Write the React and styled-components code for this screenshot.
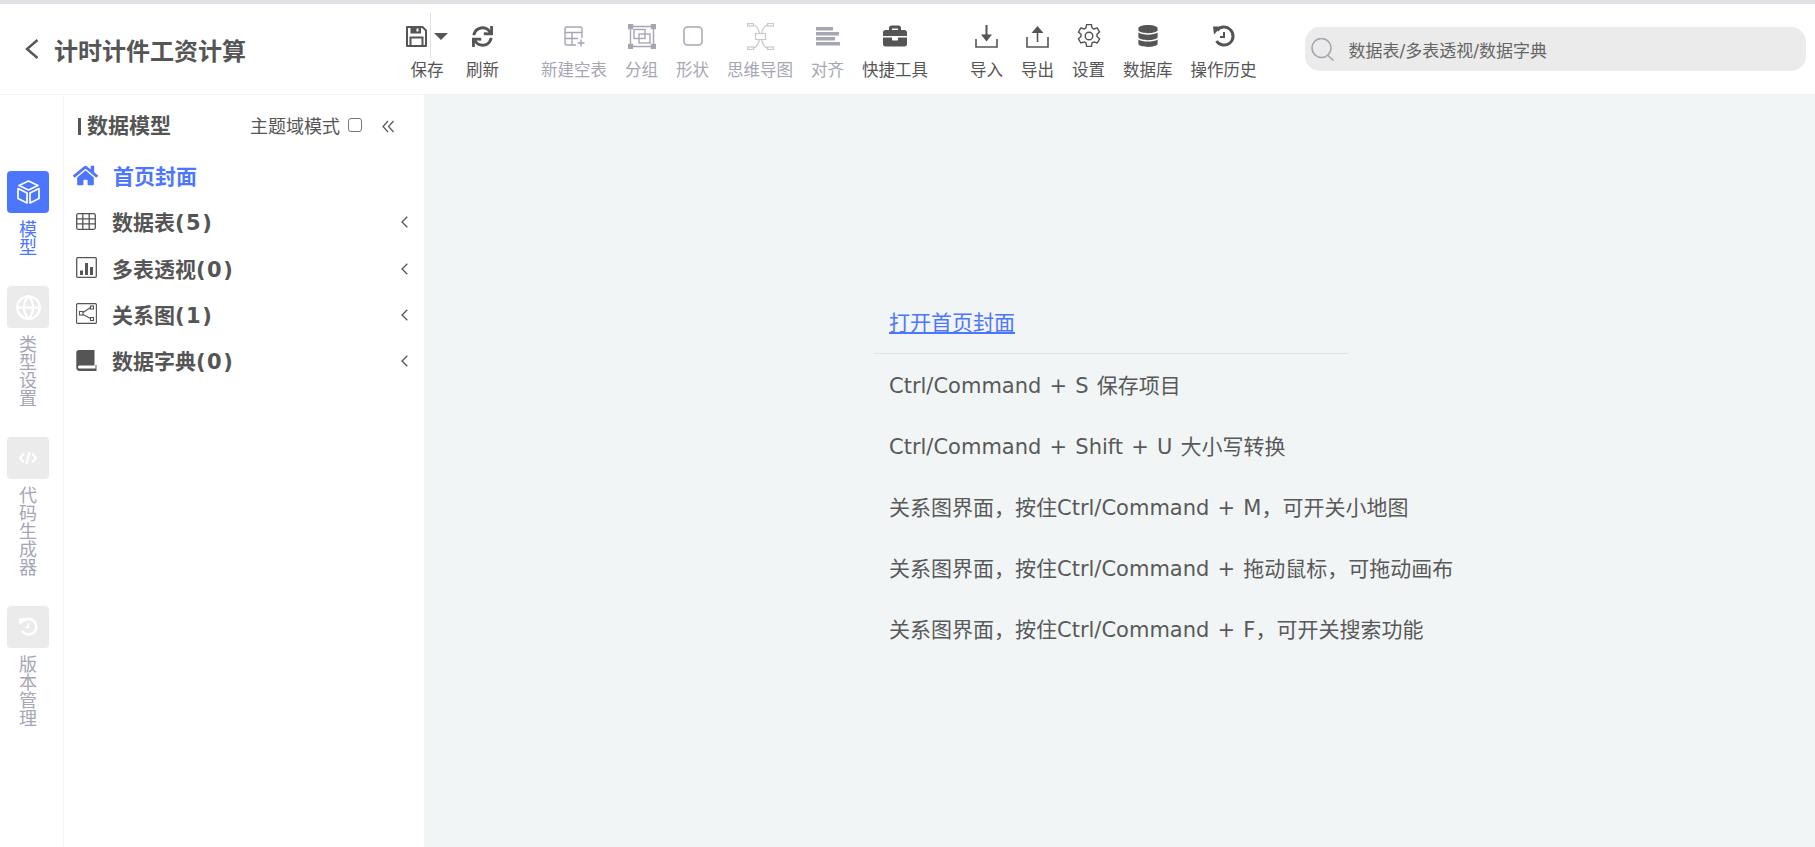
import styled, { createGlobalStyle } from "styled-components";
import { FaHome, FaSync, FaBriefcase, FaDatabase } from "react-icons/fa";
import { Globe } from "lucide-react";

const GlobalStyle = createGlobalStyle`
  html, body {
    margin: 0;
    padding: 0;
    height: 100%;
    overflow: hidden;
    background: #f1f5f6;
    font-family: "DejaVu Sans", "Noto Sans CJK SC", sans-serif;
    color: #555;
  }
`;

const SaveIcon = () => (
  <svg width="21" height="21" viewBox="0 0 21 21" fill="none" stroke="currentColor" strokeWidth="2">
    <path d="M1 1h15.500L20 4.500V20H1z" strokeLinejoin="round" />
    <path d="M4.500 1h10.500v6.500H4.500z" fill="currentColor" stroke="none" />
    <path d="M11.500 2.500v3" stroke="#fff" />
    <path d="M4.500 20v-8.500h12V20" />
  </svg>
);

const NewTableIcon = () => (
  <svg width="21" height="21" viewBox="0 0 21 21" fill="none" stroke="currentColor" strokeWidth="1.400">
    <path d="M12 19H2.500A1.500 1.500 0 0 1 1 17.500v-15A1.500 1.500 0 0 1 2.500 1h14A1.500 1.500 0 0 1 18 2.500V12" />
    <path d="M1 6.500h17M1 12.500h13M8 6.500V19" />
    <path d="M17 13.500v7M13.500 17h7" />
  </svg>
);

const GroupIcon = () => (
  <svg width="28" height="25" viewBox="0 0 28 25" fill="none" stroke="currentColor" strokeWidth="1.400">
    <path d="M3 2.500h22M3 22.500h22M2.500 3v19M25.500 3v19" />
    <rect x="0.500" y="0.500" width="4" height="4" fill="currentColor" />
    <rect x="23.500" y="0.500" width="4" height="4" fill="currentColor" />
    <rect x="0.500" y="20.500" width="4" height="4" fill="currentColor" />
    <rect x="23.500" y="20.500" width="4" height="4" fill="currentColor" />
    <rect x="6" y="5.500" width="11" height="9" />
    <rect x="11" y="10" width="11" height="9" />
  </svg>
);

const ShapeIcon = () => (
  <svg width="20" height="20" viewBox="0 0 20 20" fill="none" stroke="currentColor" strokeWidth="1.500">
    <rect x="1" y="1" width="18" height="18" rx="3.500" />
  </svg>
);

const MindMapIcon = () => (
  <svg width="27" height="27" viewBox="0 0 27 27" fill="none" stroke="#c9c9c9" strokeWidth="1.200">
    <rect x="0.500" y="0.500" width="6" height="2.500" />
    <rect x="20.500" y="0.500" width="6" height="2.500" />
    <rect x="0.500" y="24" width="6" height="2.500" />
    <rect x="20.500" y="24" width="6" height="2.500" />
    <rect x="8.500" y="10.500" width="10" height="6" />
    <path d="M6.500 2c4 1 5 4 6 8.500M20.500 2c-4 1-5 4-6 8.500M6.500 25c4-1 5-4 6-8.500M20.500 25c-4-1-5-4-6-8.500" />
  </svg>
);

const AlignIcon = () => (
  <svg width="24" height="19" viewBox="0 0 24 19" fill="currentColor">
    <rect x="0" y="0" width="17" height="3.500" />
    <rect x="0" y="5" width="23" height="3.500" />
    <rect x="0" y="10" width="19" height="3.500" />
    <rect x="0" y="15" width="24" height="3.500" />
  </svg>
);

const ImportIcon = () => (
  <svg width="23" height="23" viewBox="0 0 23 23" fill="none" stroke="currentColor">
    <path d="M1 14v8h21v-8" strokeWidth="1.600" />
    <path d="M11.500 0v10" strokeWidth="2" />
    <path d="M6 9.500h11l-5.500 7z" fill="currentColor" stroke="none" />
  </svg>
);

const ExportIcon = () => (
  <svg width="23" height="23" viewBox="0 0 23 23" fill="none" stroke="currentColor">
    <path d="M1 12v10h21V12" strokeWidth="1.600" />
    <path d="M11.500 6v11" strokeWidth="1.600" />
    <path d="M5.500 8h12l-6-7z" fill="currentColor" stroke="none" />
  </svg>
);

const GearIcon = () => (
  <svg width="24" height="24" viewBox="1 1 22 22" fill="none" stroke="currentColor" strokeWidth="1.300" strokeLinejoin="round">
    <path d="M9.800 1.500h4.400l.6 3.100 1.700 1 3-1 2.200 3.800-2.400 2.100v2l2.400 2.100-2.200 3.800-3-1-1.700 1-.6 3.100H9.800l-.6-3.100-1.700-1-3 1-2.200-3.800 2.400-2.100v-2L2.300 8.400l2.200-3.800 3 1 1.700-1z" />
    <circle cx="12" cy="12" r="3.500" />
  </svg>
);

const HistoryIcon = ({ size = 23 }) => (
  <svg width={size} height={size} viewBox="0 0 23 23" fill="none" stroke="currentColor" strokeWidth="3">
    <path d="M5 5.500A9 9 0 1 1 4.500 16" />
    <path d="M1 1.500h8.500l-7.500 8z" fill="currentColor" stroke="none" />
    <path d="M12 7v5H8" strokeWidth="2" />
  </svg>
);

const SearchIcon = () => (
  <svg width="24" height="23" viewBox="0 0 24 23" fill="none" stroke="#a5a5b0" strokeWidth="1.600">
    <circle cx="10.500" cy="10" r="9.500" />
    <path d="M16.500 17l6 5.500" />
  </svg>
);

const BoxIcon = () => (
  <svg width="23" height="24" viewBox="0 0 23 24" fill="none" stroke="#fff" strokeWidth="1.700" strokeLinejoin="round">
    <path d="M11.500 1L21 5.500 11.500 10 2 5.500z" />
    <path d="M1 8.500l9 4.500v10l-9-4.500z" />
    <path d="M22 8.500l-9 4.500v10l9-4.500z" />
  </svg>
);

const CodeIcon = () => (
  <svg width="18" height="14" viewBox="0 0 18 14" fill="none" stroke="#fff" strokeWidth="2">
    <path d="M5 2.500L1 7l4 4.500M13 2.500L17 7l-4 4.500M10.500 1L7.500 13" />
  </svg>
);

const TableIcon = () => (
  <svg width="20" height="17" viewBox="0 0 20 17" fill="none" stroke="currentColor" strokeWidth="1.300">
    <rect x="0.700" y="0.700" width="18.600" height="15.600" rx="1.500" />
    <path d="M0.700 5.800h18.600M0.700 10.800h18.600M6.800 0.700v15.600M13.200 0.700v15.600" />
  </svg>
);

const ChartIcon = () => (
  <svg width="21" height="21" viewBox="0 0 21 21" fill="none" stroke="currentColor" strokeWidth="1.300">
    <rect x="0.700" y="0.700" width="19.600" height="19.600" rx="1" />
    <path d="M4 13.500h3V18H4zM9 6h3v12H9zM14 10h3v8h-3z" fill="currentColor" stroke="none" />
  </svg>
);

const RelationIcon = () => (
  <svg width="21" height="21" viewBox="0 0 21 21" fill="none" stroke="currentColor" strokeWidth="1.100">
    <rect x="0.600" y="0.600" width="19.800" height="19.800" rx="1" />
    <rect x="3.500" y="8.500" width="3.500" height="3.500" />
    <rect x="14.500" y="3" width="3" height="3" />
    <rect x="14.500" y="14.500" width="3" height="3" />
    <path d="M7 9.500l7.500-5M7 11.500l7.500 4" />
  </svg>
);

const BookIcon = () => (
  <svg width="21" height="21" viewBox="0 0 21 21" fill="currentColor">
    <path d="M3 0h15.500v15.500H3.500A1.500 1.500 0 0 0 2 17a1.500 1.500 0 0 0 1.500 1.500h16V15h1v6H3.500A3.200 3.200 0 0 1 .3 17.500V2.800A2.800 2.800 0 0 1 3 0z" />
  </svg>
);

const BackArrow = () => (
  <svg width="14" height="20" viewBox="0 0 14 20" fill="none" stroke="currentColor" strokeWidth="2.400">
    <path d="M12.500 1L2 10l10.500 9" />
  </svg>
);

const DoubleChevron = () => (
  <svg width="12" height="13" viewBox="0 0 12 13" fill="none" stroke="currentColor" strokeWidth="1.200">
    <path d="M6 1L1 6.500 6 12M11.500 1l-5 5.500 5 5.500" />
  </svg>
);

const railItems = [
  { label: "模型", icon: <BoxIcon />, active: true },
  { label: "类型设置", icon: <Globe size={27} color="#fff" strokeWidth={2} /> },
  { label: "代码生成器", icon: <CodeIcon /> },
  { label: "版本管理", icon: <HistoryIcon size={20} /> },
];

const menuItems = [
  { label: "数据表", count: "(5)", icon: <TableIcon /> },
  { label: "多表透视", count: "(0)", icon: <ChartIcon /> },
  { label: "关系图", count: "(1)", icon: <RelationIcon /> },
  { label: "数据字典", count: "(0)", icon: <BookIcon /> },
];

const hints = [
  "Ctrl/Command + S 保存项目",
  "Ctrl/Command + Shift + U 大小写转换",
  "关系图界面，按住Ctrl/Command + M，可开关小地图",
  "关系图界面，按住Ctrl/Command + 拖动鼠标，可拖动画布",
  "关系图界面，按住Ctrl/Command + F，可开关搜索功能",
];

const App = () => {
  return (
    <Page>
      <GlobalStyle />
      <Header>
        <TitleBlock>
          <BackArrow />
          <Title>计时计件工资计算</Title>
        </TitleBlock>
        <Toolbar>
          <ToolGroup>
            <Tool>
              <ToolIcon>
                <SaveIcon />
                <SaveDivider />
                <Caret />
              </ToolIcon>
              <ToolLabel>保存</ToolLabel>
            </Tool>
            <Tool>
              <ToolIcon><FaSync size={21} /></ToolIcon>
              <ToolLabel>刷新</ToolLabel>
            </Tool>
          </ToolGroup>
          <ToolGroup>
            <Tool $muted>
              <ToolIcon><NewTableIcon /></ToolIcon>
              <ToolLabel>新建空表</ToolLabel>
            </Tool>
            <Tool $muted>
              <ToolIcon><GroupIcon /></ToolIcon>
              <ToolLabel>分组</ToolLabel>
            </Tool>
            <Tool $muted>
              <ToolIcon><ShapeIcon /></ToolIcon>
              <ToolLabel>形状</ToolLabel>
            </Tool>
            <Tool $muted>
              <ToolIcon><MindMapIcon /></ToolIcon>
              <ToolLabel>思维导图</ToolLabel>
            </Tool>
            <Tool $muted>
              <ToolIcon><AlignIcon /></ToolIcon>
              <ToolLabel>对齐</ToolLabel>
            </Tool>
            <Tool>
              <ToolIcon><FaBriefcase size={24} /></ToolIcon>
              <ToolLabel>快捷工具</ToolLabel>
            </Tool>
          </ToolGroup>
          <ToolGroup>
            <Tool>
              <ToolIcon><ImportIcon /></ToolIcon>
              <ToolLabel>导入</ToolLabel>
            </Tool>
            <Tool>
              <ToolIcon><ExportIcon /></ToolIcon>
              <ToolLabel>导出</ToolLabel>
            </Tool>
            <Tool>
              <ToolIcon><GearIcon /></ToolIcon>
              <ToolLabel>设置</ToolLabel>
            </Tool>
            <Tool>
              <ToolIcon><FaDatabase size={22} /></ToolIcon>
              <ToolLabel>数据库</ToolLabel>
            </Tool>
            <Tool>
              <ToolIcon><HistoryIcon /></ToolIcon>
              <ToolLabel>操作历史</ToolLabel>
            </Tool>
          </ToolGroup>
        </Toolbar>
        <SearchBox>
          <SearchIcon />
          <SearchText>数据表/多表透视/数据字典</SearchText>
        </SearchBox>
      </Header>
      <Body>
        <Rail>
          {railItems.map((item) => (
            <RailItem key={item.label} $active={item.active}>
              <RailTile $active={item.active}>{item.icon}</RailTile>
              <RailLabel>{item.label}</RailLabel>
            </RailItem>
          ))}
        </Rail>
        <Sidebar>
          <SidebarHead>
            <SidebarTitle>数据模型</SidebarTitle>
            <DomainToggle>
              主题域模式
              <CheckBox />
            </DomainToggle>
            <CollapseButton><DoubleChevron /></CollapseButton>
          </SidebarHead>
          <HomeRow>
            <FaHome size={25} />
            <span>首页封面</span>
          </HomeRow>
          {menuItems.map((item) => (
            <MenuRow key={item.label}>
              <MenuIcon>{item.icon}</MenuIcon>
              <MenuLabel>
                {item.label}
                <MenuCount>{item.count}</MenuCount>
              </MenuLabel>
              <MenuChevron viewBox="0 0 7 12">
                <path d="M6.300 .7L1 6l5.300 5.300" />
              </MenuChevron>
            </MenuRow>
          ))}
        </Sidebar>
        <Main>
          <Notes>
            <NoteLink href="#">打开首页封面</NoteLink>
            <NoteRule />
            {hints.map((hint) => (
              <Note key={hint}>{hint}</Note>
            ))}
          </Notes>
        </Main>
      </Body>
    </Page>
  );
};

const Page = styled.div`
  display: flex;
  flex-direction: column;
  height: 847px;
  width: 1815px;
  overflow: hidden;
  border-top: 4px solid #e0e2e5;
  box-sizing: border-box;
`;

const Header = styled.header`
  display: flex;
  flex: none;
  height: 90px;
  background: #fff;
`;

const TitleBlock = styled.div`
  display: flex;
  align-items: center;
  gap: 15px;
  width: 406px;
  padding-left: 25px;
  box-sizing: border-box;
  flex: none;
  color: #555;
`;

const Title = styled.h1`
  margin: 0;
  font-size: 24px;
  font-weight: 700;
  color: #555;
  white-space: nowrap;
`;

const Toolbar = styled.div`
  display: flex;
  gap: 42px;
  flex: none;
`;

const ToolGroup = styled.div`
  display: flex;
  gap: 18px;
`;

const Tool = styled.div`
  display: flex;
  flex-direction: column;
  align-items: center;
  color: ${(p) => (p.$muted ? "#a6a6b4" : "#555")};
`;

const ToolIcon = styled.div`
  display: flex;
  align-items: center;
  justify-content: center;
  height: 28px;
  margin-top: 18px;
  position: relative;
`;

const SaveDivider = styled.span`
  position: absolute;
  left: 24px;
  top: -9px;
  height: 45px;
  border-left: 1px solid #dfe1e5;
`;

const Caret = styled.span`
  margin-left: 7px;
  border-left: 7px solid transparent;
  border-right: 7px solid transparent;
  border-top: 7px solid #555;
`;

const ToolLabel = styled.span`
  margin-top: 11px;
  font-size: 16.500px;
  line-height: 20px;
  white-space: nowrap;
`;

const SearchBox = styled.div`
  display: flex;
  align-items: center;
  gap: 14px;
  width: 501px;
  height: 44px;
  margin: 23px 0 0 48px;
  padding-left: 6px;
  box-sizing: border-box;
  background: #ebebeb;
  border-radius: 15px;
  flex: none;
`;

const SearchText = styled.span`
  font-size: 17px;
  color: #666;
`;

const Body = styled.div`
  display: flex;
  flex: 1;
  min-height: 0;
  margin-top: 1px;
`;

const Rail = styled.nav`
  display: flex;
  flex-direction: column;
  flex: none;
  width: 63px;
  padding: 76px 0 0 7px;
  box-sizing: border-box;
  background: #fff;
  margin-right: 1px;
`;

const RailItem = styled.div`
  display: flex;
  flex-direction: column;
  align-items: center;
  width: 42px;
  margin-bottom: 29px;
  color: ${(p) => (p.$active ? "#4d76ff" : "#a6a6b4")};
`;

const RailTile = styled.div`
  display: flex;
  align-items: center;
  justify-content: center;
  width: 42px;
  height: 42px;
  border-radius: 4px;
  color: #fff;
  background: ${(p) => (p.$active ? "#4d76ff" : "#ebebeb")};
`;

const RailLabel = styled.span`
  margin-top: 8px;
  width: 18px;
  font-size: 18px;
  line-height: 18px;
  text-align: center;
  word-break: break-all;
`;

const Sidebar = styled.aside`
  flex: none;
  width: 360px;
  background: #fff;
`;

const SidebarHead = styled.div`
  display: flex;
  align-items: center;
  height: 57px;
  padding: 5px 0 0 14px;
  box-sizing: border-box;
`;

const SidebarTitle = styled.h2`
  margin: 0;
  padding-left: 6px;
  border-left: 3px solid #555;
  font-size: 21px;
  line-height: 17px;
  font-weight: 700;
  color: #555;
  white-space: nowrap;
`;

const DomainToggle = styled.div`
  display: flex;
  align-items: center;
  margin: 0 0 3px auto;
  font-size: 18px;
  color: #555;
  white-space: nowrap;
`;

const CheckBox = styled.span`
  width: 12px;
  height: 12px;
  margin-left: 8px;
  border: 1px solid #777;
  border-radius: 3px;
`;

const CollapseButton = styled.span`
  display: flex;
  margin: 0 30px 0 20px;
  color: #555;
`;

const HomeRow = styled.div`
  display: flex;
  align-items: center;
  gap: 15px;
  height: 46px;
  padding-left: 9px;
  font-size: 21px;
  font-weight: 700;
  color: #4d76ff;
`;

const MenuRow = styled.div`
  display: flex;
  align-items: center;
  height: 46.400px;
  padding: 0 16px 0 12px;
`;

const MenuIcon = styled.span`
  display: flex;
  width: 36px;
  flex: none;
`;

const MenuLabel = styled.span`
  flex: 1;
  font-size: 21px;
  font-weight: 700;
  color: #555;
  white-space: nowrap;
`;

const MenuCount = styled.span`
  letter-spacing: 1.500px;
`;

const MenuChevron = styled.svg`
  width: 7px;
  height: 12px;
  margin-top: 2px;
  fill: none;
  stroke: #555;
  stroke-width: 1.300;
`;

const Main = styled.main`
  flex: 1;
  padding: 198px 0 0 450px;
`;

const Notes = styled.div`
  width: 474px;
`;

const NoteLink = styled.a`
  display: block;
  padding-left: 15px;
  font-size: 21px;
  line-height: 60px;
  color: #4d76ff;
  text-decoration: underline;
`;

const NoteRule = styled.div`
  border-top: 1px solid #dfe3e8;
  margin-bottom: 2px;
`;

const Note = styled.p`
  margin: 0;
  padding-left: 15px;
  font-size: 21px;
  line-height: 61px;
  word-spacing: 1.500px;
  color: #595959;
  white-space: nowrap;
`;

export default App;
